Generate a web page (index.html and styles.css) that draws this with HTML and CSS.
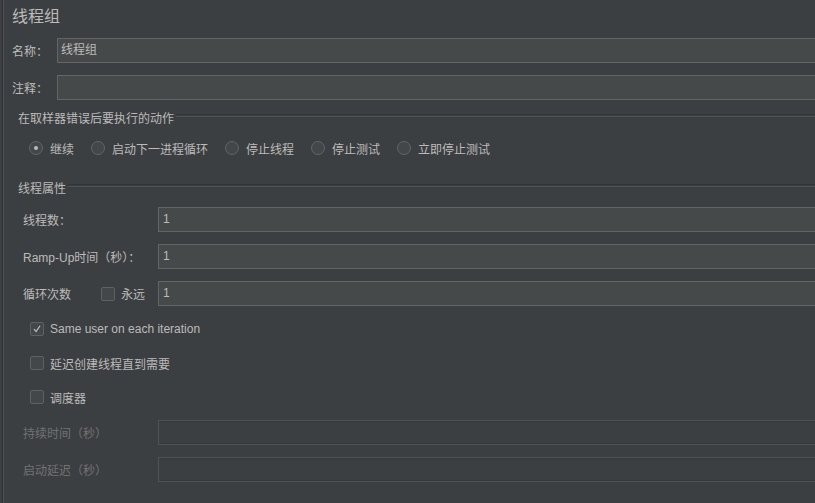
FILE: index.html
```html
<!DOCTYPE html>
<html lang="zh">
<head>
<meta charset="utf-8">
<title>线程组</title>
<link rel="stylesheet" href="styles.css">
</head>
<body>
<div class="panel">
  <div class="title">线程组</div>

  <div class="row row-name">
    <span class="label w45">名称：</span>
    <div class="field">线程组</div>
  </div>
  <div class="row row-comment">
    <span class="label w45">注释：</span>
    <div class="field"></div>
  </div>

  <div class="group-title gt1"><span class="gt-text">在取样器错误后要执行的动作</span><span class="gt-line"></span></div>
  <div class="radios">
    <span class="radio on"></span><span class="rlabel">继续</span>
    <span class="radio"></span><span class="rlabel">启动下一进程循环</span>
    <span class="radio"></span><span class="rlabel">停止线程</span>
    <span class="radio"></span><span class="rlabel">停止测试</span>
    <span class="radio"></span><span class="rlabel">立即停止测试</span>
  </div>

  <div class="group-title gt2"><span class="gt-text">线程属性</span><span class="gt-line"></span></div>

  <div class="prop first">
    <span class="label plabel">线程数：</span>
    <div class="field num">1</div>
  </div>
  <div class="prop">
    <span class="label plabel">Ramp-Up时间（秒）：</span>
    <div class="field num">1</div>
  </div>
  <div class="prop">
    <span class="label loop-label">循环次数</span>
    <span class="check"></span>
    <span class="label forever">永远</span>
    <div class="field num">1</div>
  </div>

  <div class="crow c1"><span class="check checked"><svg width="14" height="14" viewBox="0 0 14 14"><path d="M3.5 7.2 L6 10 L10.5 3.2" fill="none" stroke="#bbbbbb" stroke-width="1.5"/></svg></span><span class="clabel">Same user on each iteration</span></div>
  <div class="crow c2"><span class="check"></span><span class="clabel">延迟创建线程直到需要</span></div>
  <div class="crow c3"><span class="check"></span><span class="clabel">调度器</span></div>

  <div class="prop dis first-dis">
    <span class="label plabel disabled">持续时间（秒）</span>
    <div class="field off"></div>
  </div>
  <div class="prop dis">
    <span class="label plabel disabled">启动延迟（秒）</span>
    <div class="field off"></div>
  </div>
</div>
</body>
</html>
```
FILE: styles.css
```css
html, body {
  margin: 0;
  padding: 0;
  background: #3c3f41;
  overflow: hidden;
}
body {
  width: 815px;
  height: 503px;
  font-family: "Liberation Sans", "Noto Sans CJK SC", sans-serif;
  font-size: 12px;
  color: #bbbbbb;
}
.panel {
  width: 840px;
  height: 503px;
  box-sizing: border-box;
  margin-left: 2px;
  border-left: 1px solid #2f3133;
  box-shadow: inset 1px 0 0 #4e5254;
  padding-left: 9px;
}
.title {
  font-size: 16px;
  height: 20px;
  line-height: 20px;
  padding-top: 7px;
  color: #bbbbbb;
}
.row {
  display: flex;
  align-items: center;
  height: 25px;
}
.row-name { margin-top: 11px; }
.row-comment { margin-top: 12px; }
.label { white-space: nowrap; }
.w45 { width: 45px; flex: none; }
.field {
  flex: 1;
  height: 25px;
  box-sizing: border-box;
  background: #45494a;
  border: 1px solid #646464;
  line-height: 23px;
  padding-left: 3px;
  color: #bbbbbb;
}
.field.num { padding-left: 4px; }
.field.off {
  background: #3c3f41;
  border: 1px solid #4f5356;
  box-shadow: inset 0 1px 0 #35383a, inset 0 -1px 0 #35383a;
}
.group-title {
  display: flex;
  align-items: center;
  height: 18px;
  padding-left: 6px;
}
.gt1 { margin-top: 8px; }
.gt2 { margin-top: 20px; }
.gt-text { flex: none; }
.gt-line {
  flex: 1;
  height: 1px;
  margin-left: 2px;
  margin-bottom: 4px;
  border-top: 1px solid #323436;
  border-bottom: 1px solid #4f5254;
}
.radios {
  display: flex;
  align-items: center;
  height: 20px;
  margin-top: 12px;
  padding-left: 17px;
}
.radio {
  flex: none;
  width: 14px;
  height: 14px;
  box-sizing: border-box;
  border-radius: 50%;
  border: 1px solid #626567;
  background: #43474a;
  margin-left: 17px;
  display: flex;
  align-items: center;
  justify-content: center;
}
.radio:first-child { margin-left: 0; }
.radio.on::after {
  content: "";
  width: 4px;
  height: 4px;
  border-radius: 50%;
  background: #bbbbbb;
}
.rlabel { margin-left: 7px; white-space: nowrap; }
.prop {
  display: flex;
  align-items: center;
  height: 25px;
  margin-top: 12px;
  padding-left: 11px;
}
.prop.first { margin-top: 11px; }
.plabel { width: 135px; flex: none; }
.loop-label { width: 78px; flex: none; }
.forever { width: 37px; flex: none; margin-left: 6px; }
.check {
  flex: none;
  width: 14px;
  height: 14px;
  box-sizing: border-box;
  border: 1px solid #5e6163;
  border-radius: 2px;
  background: #43474a;
  display: flex;
  align-items: center;
  justify-content: center;
}
.check svg { display: block; }
.crow {
  display: flex;
  align-items: center;
  height: 20px;
  padding-left: 18px;
}
.c1 { margin-top: 13px; }
.c2 { margin-top: 14px; }
.c3 { margin-top: 14px; }
.clabel { margin-left: 6px; white-space: nowrap; }
.prop.first-dis { margin-top: 13px; }
.disabled { color: #707274; }
```
